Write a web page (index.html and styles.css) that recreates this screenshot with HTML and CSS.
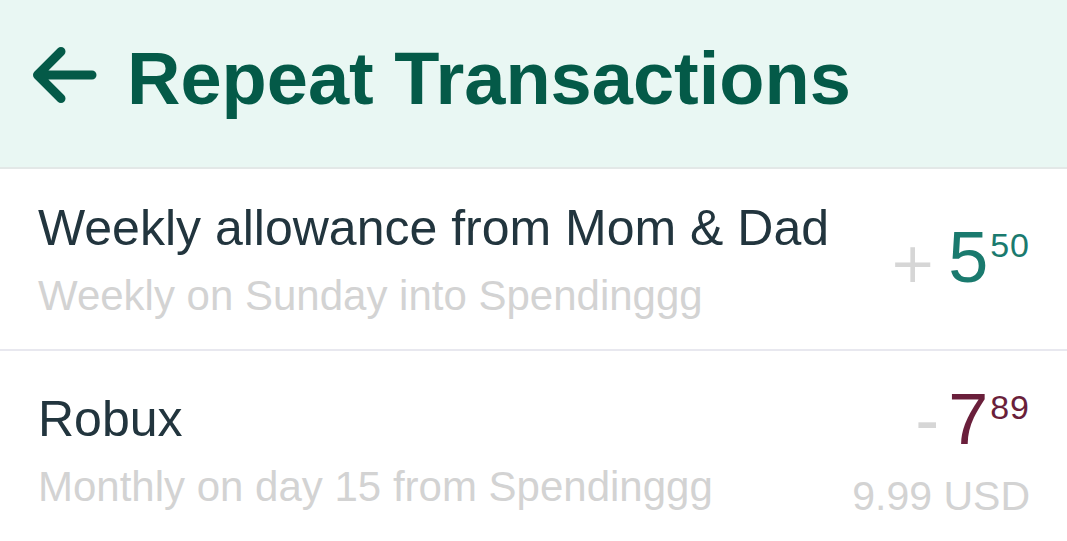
FILE: index.html
```html
<!DOCTYPE html>
<html lang="en">
<head>
    <meta charset="UTF-8">
    <meta name="viewport" content="width=device-width, initial-scale=1.0">
    <title>Repeat Transactions</title>
    <link rel="stylesheet" href="styles.css">
</head>

<body>
    <header class="top-bar">
        <svg class="back-arrow" width="68" height="58" viewBox="0 0 68 58" aria-hidden="true">
            <path d="M63 29 H8.5 M32 5.5 L8.5 29 L32 52.5" fill="none" stroke="#045a48" stroke-width="9" stroke-linecap="round" stroke-linejoin="round"/>
        </svg>
        <h1>Repeat Transactions</h1>
    </header>

    <main class="list">
        <div class="row">
            <div class="info">
                <div class="title">Weekly allowance from Mom &amp; Dad</div>
                <div class="sub">Weekly on Sunday into Spendinggg</div>
            </div>
            <div class="money">
                <div class="amount income">
                    <span class="sign plus">+</span><span class="whole">5</span><span class="cents">50</span>
                </div>
            </div>
        </div>

        <div class="row">
            <div class="info">
                <div class="title">Robux</div>
                <div class="sub">Monthly on day 15 from Spendinggg</div>
            </div>
            <div class="money">
                <div class="amount expense">
                    <span class="sign minus">-</span><span class="whole">7</span><span class="cents">89</span>
                </div>
                <div class="orig">9.99 USD</div>
            </div>
        </div>
    </main>
</body>
</html>
```

FILE: styles.css
```css
/* General Styles */
* {
    margin: 0;
    padding: 0;
    box-sizing: border-box;
}

html, body {
    font-family: 'Liberation Sans', Arial, sans-serif;
    background: #ffffff;
    color: #22353e;
    height: 100%;
    overflow: hidden;
}

/* Header */
.top-bar {
    height: 169px;
    display: flex;
    align-items: center;
    gap: 30px;
    padding: 0 0 9px 29px;
    background: #e9f7f3;
    border-bottom: 2px solid #e3e8e7;
}

.back-arrow {
    flex-shrink: 0;
    margin-bottom: 8px;
}

.top-bar h1 {
    font-size: 74px;
    line-height: 84px;
    font-weight: bold;
    color: #045a48;
}

/* Transaction rows */
.row {
    display: flex;
    justify-content: space-between;
    align-items: center;
    padding: 30px 37px 29px 38px;
    border-bottom: 2px solid #e8e8ef;
}

.info .title {
    font-size: 50px;
    line-height: 58px;
    color: #22353e;
}

.info .sub {
    margin-top: 15px;
    font-size: 42px;
    line-height: 48px;
    color: #d3d3d3;
}

.money {
    display: flex;
    flex-direction: column;
    align-items: flex-end;
}

.amount {
    font-size: 72px;
    line-height: 76px;
    white-space: nowrap;
}

.amount .sign {
    color: #d6d6d6;
}

.amount .plus {
    font-family: 'DejaVu Sans', sans-serif;
    font-size: 56px;
    margin-right: 12px;
}

.amount .minus {
    margin-right: 9px;
}

.amount .cents {
    font-size: 34px;
    line-height: 1;
    vertical-align: 25px;
    margin-left: 2px;
    letter-spacing: 1px;
}

.income .whole, .income .cents {
    color: #1a7a6e;
}

.expense .whole, .expense .cents {
    color: #6a1f3b;
}

.orig {
    margin-top: 16px;
    font-size: 41px;
    line-height: 46px;
    color: #d3d3d3;
}
```
